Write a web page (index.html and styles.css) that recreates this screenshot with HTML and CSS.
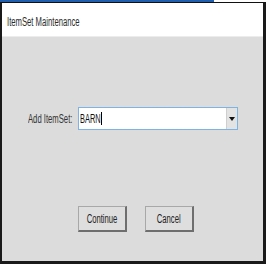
FILE: index.html
```html
<!DOCTYPE html>
<html>
<head>
<meta charset="utf-8">
<link rel="stylesheet" href="styles.css">
</head>
<body>
<div class="accent"></div>
<div class="window">
  <div class="titlebar"><span class="sq title">ItemSet Maintenance</span></div>
  <div class="content">
    <div class="row">
      <div class="label"><span class="sq">Add ItemSet:</span></div>
      <div class="combo">
        <div class="field"><span class="valuebox"><span class="sq">BARN</span></span><span class="caret"></span></div>
        <div class="drop"><span class="tri"></span></div>
      </div>
    </div>
    <div class="buttons">
      <div class="btn"><span class="sq">Continue</span></div>
      <div class="btn"><span class="sq">Cancel</span></div>
    </div>
  </div>
</div>
</body>
</html>
```
FILE: styles.css
```css
html, body {
  margin: 0;
  padding: 0;
}
body {
  width: 266px;
  height: 264px;
  overflow: hidden;
  background: #ffffff;
  font-family: "Liberation Sans", Arial, sans-serif;
  font-size: 12px;
  color: #222;
}
.accent {
  height: 2px;
  background: linear-gradient(to right, #1f5fae 0, #1f5fae 214px, #ffffff 214px);
}
.window {
  box-sizing: border-box;
  height: 262px;
  border-top: 1px solid #111;
  border-left: 2px solid #1a1a1a;
  border-right: 3px solid #1a1a1a;
  border-bottom: 3px solid #1a1a1a;
  display: flex;
  flex-direction: column;
}
.sq {
  display: inline-block;
  transform: scaleX(0.64);
  transform-origin: left center;
  white-space: nowrap;
}
.titlebar {
  height: 34px;
  background: #fff;
  border-bottom: 1px solid #ececec;
  display: flex;
  align-items: center;
  padding-left: 5px;
  padding-top: 4px;
  box-sizing: border-box;
  color: #2a2a2a;
}
.content {
  flex: 1;
  background: #dcdcdc;
  padding-top: 70px;
  padding-left: 26px;
  display: flex;
  flex-direction: column;
}
.row {
  display: flex;
  align-items: center;
  height: 23px;
}
.label {
  width: 50px;
  color: #333;
}
.combo {
  box-sizing: border-box;
  width: 160px;
  height: 23px;
  border: 1px solid #7db4e4;
  background: #fff;
  display: flex;
}
.field {
  flex: 1;
  display: flex;
  align-items: center;
  padding-left: 1px;
  color: #111;
}
.valuebox {
  display: inline-block;
  width: 21px;
}
.valuebox .sq {
  transform: scaleX(0.62);
}
.caret {
  display: inline-block;
  width: 1px;
  height: 13px;
  background: #000;
}
.drop {
  width: 10px;
  background: #e3e3e3;
  border-left: 1px solid #cfcfcf;
  display: flex;
  align-items: center;
  justify-content: center;
}
.tri {
  width: 0;
  height: 0;
  border-left: 3px solid transparent;
  border-right: 3px solid transparent;
  border-top: 4px solid #111;
}
.buttons {
  display: flex;
  gap: 18px;
  margin-top: 76px;
  padding-left: 50px;
}
.btn {
  box-sizing: border-box;
  width: 49px;
  height: 26px;
  background: #dedede;
  border-top: 1px solid #a8a8a8;
  border-left: 1px solid #a8a8a8;
  border-right: 2px solid #6e6e6e;
  border-bottom: 2px solid #6e6e6e;
  display: flex;
  align-items: center;
  justify-content: center;
  color: #222;
}
.btn .sq {
  transform-origin: center center;
}
```
